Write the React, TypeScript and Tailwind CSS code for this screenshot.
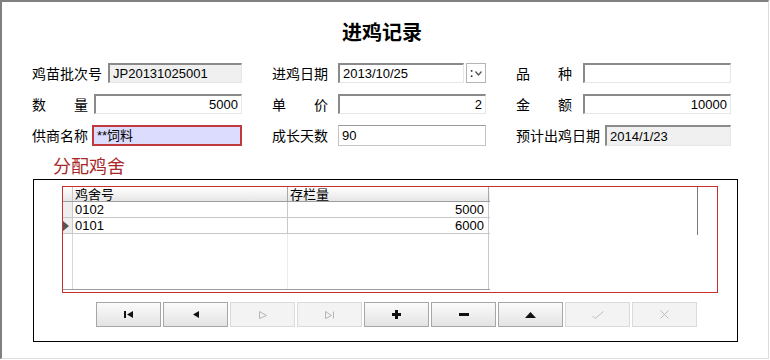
import React from "react";

const cjk = { fontFamily: '"Noto Sans CJK SC", "Liberation Sans", sans-serif' };
const val = { fontFamily: '"Liberation Sans", "Noto Sans CJK SC", sans-serif' };

// sunken win32-style text box
const Field: React.FC<{
  w: string;
  text?: string;
  right?: boolean;
  kind?: "normal" | "readonly" | "flat" | "error";
}> = ({ w, text = "", right, kind = "normal" }) => {
  const base = "h-full flex items-center px-[3px] text-[13px] text-black " + w;
  const look =
    kind === "readonly"
      ? "bg-[#f0f0f0] border-t-2 border-l-2 border-b border-r border-t-[#8a8a8a] border-l-[#8a8a8a] border-b-[#e6e6e6] border-r-[#e6e6e6]"
      : kind === "error"
      ? "bg-[#dcdcff] border-2 border-[#c0393b]"
      : kind === "flat"
      ? "bg-white border border-[#c4c4c4] border-t-[#9a9a9a]"
      : "bg-white border-t-2 border-l-2 border-b border-r border-t-[#8a8a8a] border-l-[#8a8a8a] border-b-[#e6e6e6] border-r-[#e6e6e6]";
  return (
    <div className={`${base} ${look} ${right ? "justify-end" : ""}`} style={val}>
      <span className="whitespace-nowrap leading-none">{text}</span>
    </div>
  );
};

const Label: React.FC<{ text: string; spread?: boolean }> = ({ text, spread }) =>
  spread ? (
    <div className="w-[56px] flex justify-between text-[14px] text-black" style={cjk}>
      <span>{text[0]}</span>
      <span>{text[1]}</span>
    </div>
  ) : (
    <div className="text-[14px] text-black whitespace-nowrap" style={cjk}>
      {text}
    </div>
  );

const NavButton: React.FC<{ disabled?: boolean; children: React.ReactNode }> = ({ disabled, children }) => (
  <div
    className={
      "w-[65px] h-[25px] flex items-center justify-center border " +
      (disabled
        ? "border-[#dadada] bg-[#f3f3f3]"
        : "border-[#a6a6a6] bg-gradient-to-b from-[#fbfbfb] to-[#e3e3e3]")
    }
  >
    {children}
  </div>
);

export default function App() {
  return (
    <div className="w-[770px] h-[360px] bg-white">
      <div className="w-[769px] h-[359px] border-t-2 border-l-2 border-[#808080] border-r border-b border-r-[#dcdcdc] border-b-[#dcdcdc]">
        {/* title */}
        <div className="pt-[16px] pr-[6px] text-center text-[20px] leading-[28px] font-bold text-black" style={cjk}>
          进鸡记录
        </div>

        {/* form */}
        <div className="mt-[17px] pl-[30px] flex gap-[30px]">
          <div className="w-[210px] flex flex-col gap-[11px]">
            <div className="h-[20px] flex items-center">
              <Label text="鸡苗批次号" />
              <div className="ml-auto h-full flex">
                <Field w="w-[134px]" text="JP20131025001" kind="readonly" />
              </div>
            </div>
            <div className="h-[20px] flex items-center">
              <Label text="数量" spread />
              <div className="ml-auto h-full flex">
                <Field w="w-[148px]" text="5000" right />
              </div>
            </div>
            <div className="h-[21px] flex items-center">
              <Label text="供商名称" />
              <div className="ml-auto h-full flex">
                <Field w="w-[150px]" text="**饲料" kind="error" />
              </div>
            </div>
          </div>

          <div className="w-[214px] flex flex-col gap-[11px]">
            <div className="h-[20px] flex items-center">
              <Label text="进鸡日期" />
              <div className="ml-auto h-full flex gap-[2px]">
                <Field w="w-[126px]" text="2013/10/25" />
                <div className="w-[20px] h-full border border-[#b4b4b4] bg-white flex items-center justify-center gap-[2px] text-[12px] text-black">
                  <span className="leading-none">:</span>
                  <svg width="7" height="5" viewBox="0 0 7 5">
                    <path d="M0.5 0.5 L3.5 4 L6.5 0.5" fill="none" stroke="#555" strokeWidth="1.3" />
                  </svg>
                </div>
              </div>
            </div>
            <div className="h-[20px] flex items-center">
              <Label text="单价" spread />
              <div className="ml-auto h-full flex">
                <Field w="w-[148px]" text="2" right />
              </div>
            </div>
            <div className="h-[21px] flex items-center">
              <Label text="成长天数" />
              <div className="ml-auto h-full flex">
                <Field w="w-[148px]" text="90" kind="flat" />
              </div>
            </div>
          </div>

          <div className="w-[215px] flex flex-col gap-[11px]">
            <div className="h-[20px] flex items-center">
              <Label text="品种" spread />
              <div className="ml-auto h-full flex">
                <Field w="w-[148px]" />
              </div>
            </div>
            <div className="h-[20px] flex items-center">
              <Label text="金额" spread />
              <div className="ml-auto h-full flex">
                <Field w="w-[148px]" text="10000" right />
              </div>
            </div>
            <div className="h-[21px] flex items-center">
              <Label text="预计出鸡日期" />
              <div className="ml-auto h-full flex">
                <Field w="w-[126px]" text="2014/1/23" kind="readonly" />
              </div>
            </div>
          </div>
        </div>

        {/* section caption */}
        <div className="mt-[7px] ml-[51px] text-[18px] leading-[24px] text-[#a8282a]" style={cjk}>
          分配鸡舍
        </div>

        {/* panel */}
        <div className="mt-[2px] ml-[31px] w-[705px] h-[163px] border border-black">
          <div className="mt-[6px] ml-[28px] w-[656px] h-[107px] border border-[#c8302f] flex">
            {/* data grid */}
            <div className="w-[427px] h-[103px] border-b border-[#9c9c9c] flex flex-col" style={val}>
              <div className="h-[15px] flex border-b border-[#9c9c9c] bg-gradient-to-b from-white to-[#e6e6e6] text-[13px] leading-[14px] text-black">
                <div className="w-[10px] border-r border-[#c8c8c8]" />
                <div className="w-[215px] border-r border-[#a8a8a8] pl-[2px]" style={cjk}>鸡舍号</div>
                <div className="w-[201px] border-r border-[#a8a8a8] pl-[2px]" style={cjk}>存栏量</div>
              </div>
              {[
                { no: "0102", n: "5000", cur: false },
                { no: "0101", n: "6000", cur: true },
              ].map((r) => (
                <div key={r.no} className="h-[16px] flex border-b border-[#c8c8c8] text-[13px] leading-[15px] text-black">
                  <div className="w-[10px] border-r border-[#c8c8c8] bg-[#eeeeee] flex items-center">
                    {r.cur && (
                      <svg width="6" height="10" viewBox="0 0 6 10">
                        <polygon points="0,0 6,5 0,10" fill="#555" />
                      </svg>
                    )}
                  </div>
                  <div className="w-[215px] border-r border-[#c8c8c8] pl-[2px] flex items-center">{r.no}</div>
                  <div className="w-[201px] border-r border-[#c8c8c8] pr-[4px] flex items-center justify-end">{r.n}</div>
                </div>
              ))}
              <div className="flex-1 flex">
                <div className="w-[10px] border-r border-[#d8d8d8]" />
                <div className="w-[215px] border-r border-[#ececec]" />
                <div className="w-[201px] border-r border-[#c8c8c8]" />
              </div>
            </div>
            <div className="ml-auto mr-[19px] w-px h-[48px] bg-[#7a7a7a]" />
          </div>

          {/* navigator */}
          <div className="mt-[9px] ml-[62px] flex gap-[2px]">
            <NavButton>
              <svg width="9" height="7" viewBox="0 0 9 7">
                <rect x="0" y="0" width="2" height="7" fill="#111" />
                <polygon points="9,0 9,7 3,3.5" fill="#111" />
              </svg>
            </NavButton>
            <NavButton>
              <svg width="6" height="7" viewBox="0 0 6 7">
                <polygon points="6,0 6,7 0,3.5" fill="#111" />
              </svg>
            </NavButton>
            <NavButton disabled>
              <svg width="8" height="8" viewBox="0 0 8 8">
                <path d="M0.5 0.5 V7.5 M0.5 0.5 L7.5 4.5 L0.5 7.5" fill="none" stroke="#b4b4b4" strokeWidth="1" />
              </svg>
            </NavButton>
            <NavButton disabled>
              <svg width="10" height="8" viewBox="0 0 10 8">
                <path d="M0.5 0.5 V7.5 M0.5 0.5 L6.5 4.5 L0.5 7.5 M8.5 0.5 V7.5" fill="none" stroke="#b4b4b4" strokeWidth="1" />
              </svg>
            </NavButton>
            <NavButton>
              <svg width="9" height="9" viewBox="0 0 9 9">
                <rect x="3" y="0" width="3" height="9" fill="#111" />
                <rect x="0" y="3" width="9" height="3" fill="#111" />
              </svg>
            </NavButton>
            <NavButton>
              <svg width="10" height="3" viewBox="0 0 10 3">
                <rect x="0" y="0" width="10" height="3" fill="#111" />
              </svg>
            </NavButton>
            <NavButton>
              <svg width="11" height="6" viewBox="0 0 11 6">
                <polygon points="0,6 11,6 5.5,0" fill="#111" />
              </svg>
            </NavButton>
            <NavButton disabled>
              <svg width="12" height="8" viewBox="0 0 12 8">
                <path d="M0.5 5 L3 7.5 L11.5 0.5" fill="none" stroke="#bdbdbd" strokeWidth="1" />
              </svg>
            </NavButton>
            <NavButton disabled>
              <svg width="9" height="9" viewBox="0 0 9 9">
                <path d="M0.5 0.5 L8.5 8.5 M8.5 0.5 L0.5 8.5" fill="none" stroke="#bdbdbd" strokeWidth="1" />
              </svg>
            </NavButton>
          </div>
        </div>
      </div>
    </div>
  );
}
